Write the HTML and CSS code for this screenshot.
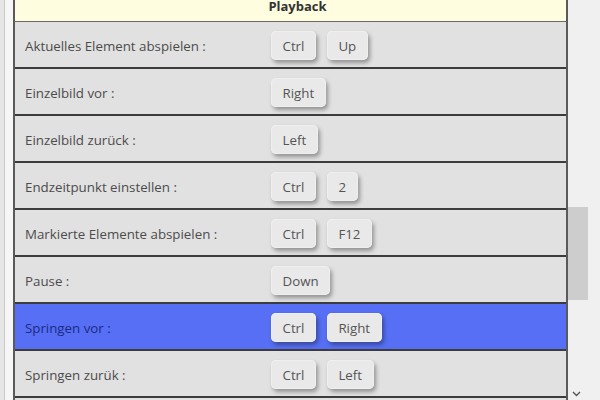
FILE: index.html
```html
<!DOCTYPE html>
<html>
<head>
<meta charset="utf-8">
<link rel="stylesheet" href="styles.css">
</head>
<body>
<div class="window">
  <div class="gutter"><div class="gutter-line"></div></div>
  <div class="panel">
    <div class="header">Playback</div>
    <div class="row"><div class="label">Aktuelles Element abspielen :</div><div class="keys"><span class="key">Ctrl</span><span class="key">Up</span></div></div>
    <div class="row"><div class="label">Einzelbild vor :</div><div class="keys"><span class="key">Right</span></div></div>
    <div class="row"><div class="label">Einzelbild zurück :</div><div class="keys"><span class="key">Left</span></div></div>
    <div class="row"><div class="label">Endzeitpunkt einstellen :</div><div class="keys"><span class="key">Ctrl</span><span class="key">2</span></div></div>
    <div class="row"><div class="label">Markierte Elemente abspielen :</div><div class="keys"><span class="key">Ctrl</span><span class="key">F12</span></div></div>
    <div class="row"><div class="label">Pause :</div><div class="keys"><span class="key">Down</span></div></div>
    <div class="row selected"><div class="label">Springen vor :</div><div class="keys"><span class="key">Ctrl</span><span class="key">Right</span></div></div>
    <div class="row"><div class="label">Springen zurük :</div><div class="keys"><span class="key">Ctrl</span><span class="key">Left</span></div></div>
  </div>
  <div class="scrollbar">
    <div class="thumb"></div>
    <div class="arrow"><svg width="9" height="6" viewBox="0 0 9 6"><path d="M1 1 L4.5 4.5 L8 1" fill="none" stroke="#555" stroke-width="1.4"/></svg></div>
  </div>
</div>
</body>
</html>
```
FILE: styles.css
```css
html, body {
  margin: 0;
  padding: 0;
  background: #f4f4f4;
  font-family: "Open Sans", "Liberation Sans", sans-serif;
}
.window {
  display: flex;
  width: 600px;
  height: 400px;
  overflow: hidden;
}
.gutter {
  width: 13px;
  flex: none;
  display: flex;
  background: #f6f6f6;
}
.gutter-line {
  width: 4px;
  background: #e6e6e6;
  border-right: 1px solid #c9c9c9;
}
.panel {
  width: 551px;
  flex: none;
  border-left: 2px solid #5a5a5a;
  border-right: 2px solid #5a5a5a;
  background: #e1e1e1;
}
.header {
  height: 21px;
  background: #fffde0;
  border-bottom: 1px solid #6a6a6a;
  text-align: center;
  font-weight: bold;
  font-size: 13px;
  line-height: 12px;
  color: #333;
  padding-left: 14px;
}
.row {
  height: 45px;
  border-bottom: 2px solid #3c3c3c;
  display: grid;
  grid-template-columns: 256px 1fr;
  align-items: center;
  background: #e1e1e1;
}
.row.selected {
  background: #566ff4;
}
.label {
  padding-left: 10px;
  padding-top: 2px;
  font-size: 13.3px;
  color: #4c4c4c;
}
.selected .label {
  color: #1b2a86;
}
.keys {
  display: flex;
  gap: 11px;
  padding-top: 1px;
}
.key {
  display: inline-block;
  height: 29px;
  line-height: 30px;
  padding: 0 11.5px;
  font-size: 13.3px;
  color: #555;
  background: #e9e9e9;
  border-radius: 5px;
  box-shadow: 2px 3px 4px rgba(0,0,0,0.35), inset 0 0 0 1px #efefef;
}
.scrollbar {
  flex: 1;
  display: flex;
  flex-direction: column;
  background: #f0f0f0;
}
.thumb {
  margin-top: 207px;
  width: 20px;
  height: 93px;
  background: #cdcdcd;
}
.arrow {
  margin-top: auto;
  padding: 0 0 3px 4px;
  line-height: 0;
}
```
